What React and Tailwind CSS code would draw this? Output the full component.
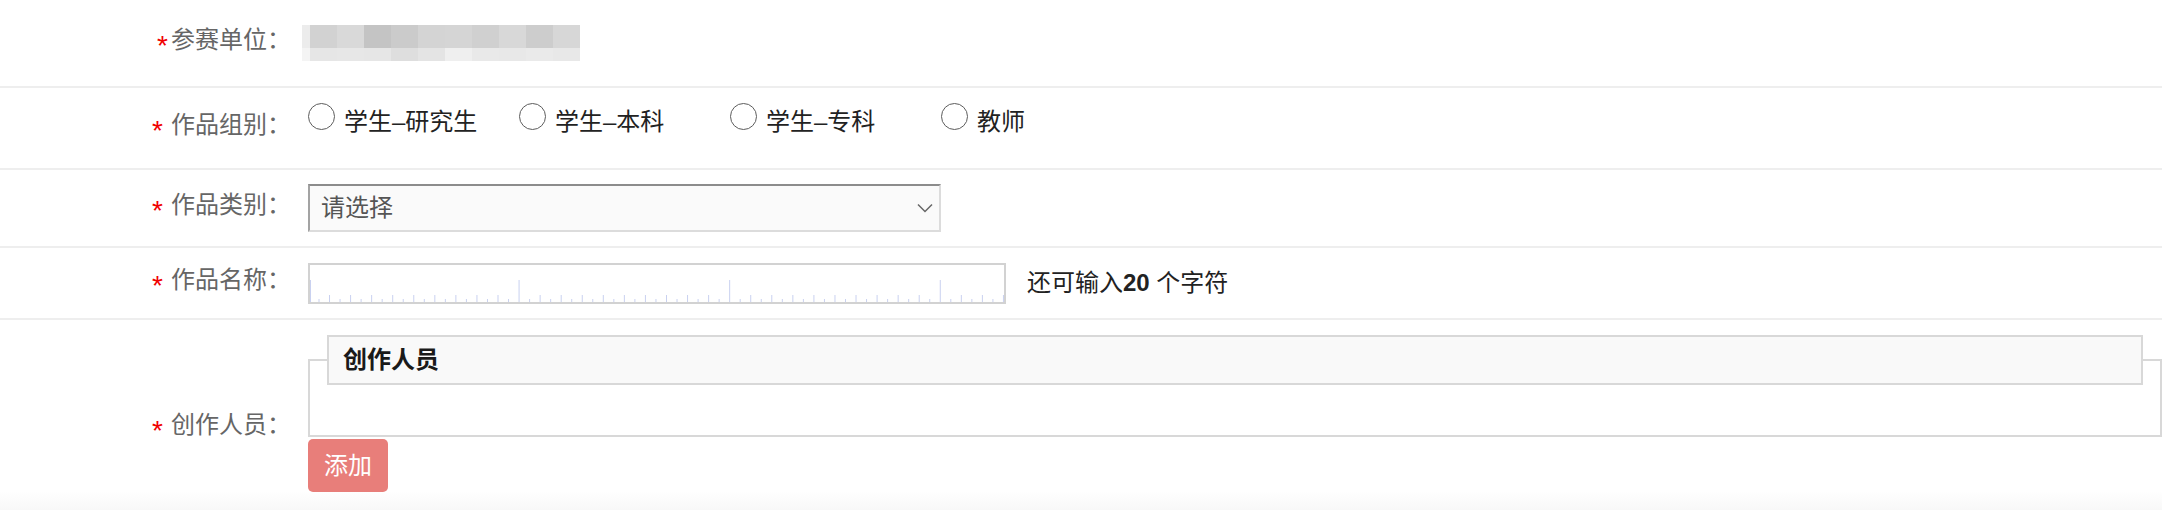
import React from 'react';

const blurTop = ['#ececec', '#d2d2d2', '#d9d9d9', '#c4c4c4', '#cbcbcb', '#d4d4d4', '#d5d5d5', '#d0d0d0', '#d8d8d8', '#cdcdcd', '#d7d7d7'];
const blurBottom = ['#f4f4f4', '#e6e6e6', '#e7e7e7', '#e6e6e6', '#dedede', '#e4e4e4', '#efefef', '#e9e9e9', '#e8e8e8', '#eaeaea', '#e8e8e8'];

const groups = ['学生–研究生', '学生–本科', '学生–专科', '教师'];

function FieldLabel({ text, spaced = true }) {
  return (
    <div className="w-[291px] shrink-0 text-right text-[24px] leading-[34px] text-[#666666] whitespace-nowrap">
      <span className={`text-[28px] text-[#f00000] align-[-7px] ${spaced ? 'mr-[8px]' : 'mr-[3px]'}`}>*</span>
      {text}：
    </div>
  );
}

function Ruler() {
  const ticks = [];
  for (let i = 1; i * 10.53 - 1.53 < 694; i++) {
    const x = i * 10.53 - 1.53;
    const h = i % 20 === 0 ? 22 : i % 2 === 0 ? 7 : 3;
    ticks.push(<line key={i} x1={x} x2={x} y1={37 - h} y2={37} stroke="#c9d1f0" strokeWidth="1" />);
  }
  return (
    <svg width="694" height="37" viewBox="0 0 694 37" className="block">
      <line x1="0.5" x2="0.5" y1="15" y2="37" stroke="#c9d1f0" strokeWidth="1" />
      {ticks}
    </svg>
  );
}

export default function App() {
  return (
    <div className="w-[2170px] h-[510px] bg-white overflow-hidden font-['Liberation_Sans','Noto_Sans_CJK_SC',sans-serif]">
      <div className="w-[2162px]">
        {/* 参赛单位 */}
        <div className="flex items-center h-[88px] border-b-2 border-[#eeeeee]">
          <FieldLabel text="参赛单位" spaced={false} />
          <div className="pl-[17px]">
            <div className="-ml-[6px] flex flex-col">
              <div className="flex h-[23px]">
                {blurTop.map((c, i) => (
                  <div key={i} className={i === 0 ? 'w-[8px]' : 'w-[27px]'} style={{ backgroundColor: c }} />
                ))}
              </div>
              <div className="flex h-[13px]">
                {blurBottom.map((c, i) => (
                  <div key={i} className={i === 0 ? 'w-[8px]' : 'w-[27px]'} style={{ backgroundColor: c }} />
                ))}
              </div>
            </div>
          </div>
        </div>

        {/* 作品组别 */}
        <div className="flex items-start h-[82px] border-b-2 border-[#eeeeee]">
          <div className="self-center">
            <FieldLabel text="作品组别" />
          </div>
          <div className="pl-[17px] pt-[15px] flex">
            {groups.map((g) => (
              <label key={g} className="w-[211px] flex items-start gap-[9px]">
                <span className="w-[27px] h-[27px] rounded-full border-[1.5px] border-[#5c5c5c] bg-white shrink-0" />
                <span className="mt-[2px] text-[24px] leading-[34px] text-[#222222] whitespace-nowrap">{g}</span>
              </label>
            ))}
          </div>
        </div>

        {/* 作品类别 */}
        <div className="flex items-center h-[78px] border-b-2 border-[#eeeeee]">
          <FieldLabel text="作品类别" />
          <div className="pl-[17px]">
            <div className="w-[633px] h-[48px] flex items-center justify-between bg-[#fafafa] border-2 border-t-[#8c8c8c] border-l-[#a3a3a3] border-r-[#dcdcdc] border-b-[#dcdcdc] pl-[11px] pr-[6px]">
              <span className="text-[24px] leading-[34px] text-[#555555]">请选择</span>
              <svg width="16" height="10" viewBox="0 0 16 10" fill="none">
                <polyline points="1,1.5 8,8.5 15,1.5" stroke="#666666" strokeWidth="1.5" />
              </svg>
            </div>
          </div>
        </div>

        {/* 作品名称 */}
        <div className="flex items-center h-[72px] border-b-2 border-[#eeeeee]">
          <FieldLabel text="作品名称" />
          <div className="pl-[17px] flex items-center">
            <div className="w-[698px] h-[41px] border-2 border-[#d2d2d2] bg-white">
              <Ruler />
            </div>
            <span className="ml-[21px] text-[24px] leading-[34px] text-[#222222] whitespace-nowrap">
              还可输入<b className="font-bold">20</b> 个字符
            </span>
          </div>
        </div>

        {/* 创作人员 */}
        <div className="flex items-start h-[190px] bg-linear-to-b from-white from-[90%] to-[#f8f8f8]">
          <div className="mt-[88px]">
            <FieldLabel text="创作人员" />
          </div>
          <div className="pl-[17px] pt-[15px] flex-1 flex flex-col items-start">
            <fieldset className="w-full border-2 border-[#d8d8d8] px-[17px] pb-[50px]">
              <legend className="w-full h-[50px] px-[14px] bg-[#f9f9f9] border-2 border-[#d8d8d8] text-[24px] leading-[46px] font-bold text-[#1a1a1a]">
                创作人员
              </legend>
            </fieldset>
            <button className="mt-[2px] w-[80px] h-[53px] rounded-[5px] bg-[#e87e7a] text-white text-[24px] leading-[34px]">
              添加
            </button>
          </div>
        </div>
      </div>
    </div>
  );
}
